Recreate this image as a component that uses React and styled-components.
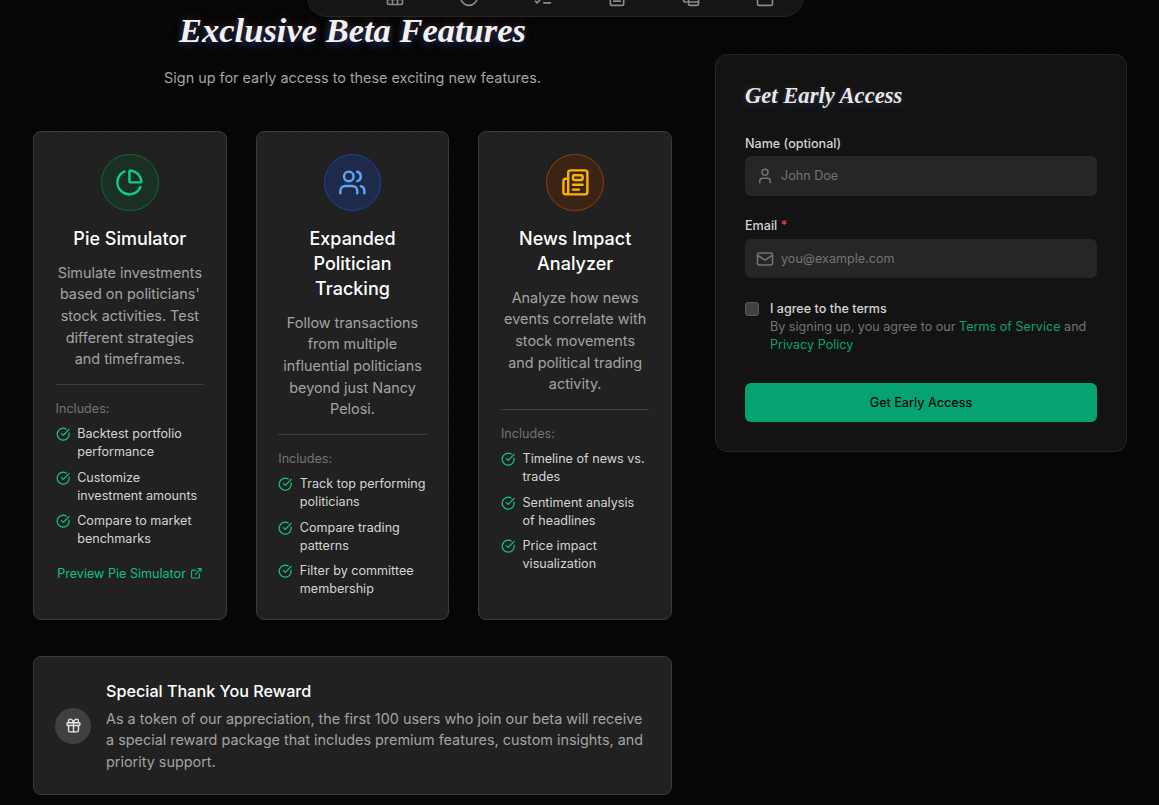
import React from 'react';
import styled, { createGlobalStyle } from 'styled-components';
import {
  ChartPie,
  CircleCheckBig,
  ExternalLink,
  Gift,
  Mail,
  Newspaper,
  User,
  Users,
  Grid3x3,
  Circle,
  ListChecks,
  FileText,
  Calendar,
} from 'lucide-react';

const GlobalStyle = createGlobalStyle`
  html, body {
    margin: 0;
    padding: 0;
    background: #050505;
  }
  body {
    font-family: Inter, "Liberation Sans", sans-serif;
    color: #fff;
  }
  * { box-sizing: border-box; }
`;

const Screen = styled.div`
  position: relative;
  width: 1159px;
  height: 805px;
  overflow: hidden;
  background-color: #060606;
  background-image: radial-gradient(rgba(255, 255, 255, 0.02) 1px, transparent 1px);
  background-size: 20px 20px;
  display: grid;
  grid-template-columns: 639px 412px;
  column-gap: 43px;
  padding: 0 0 0 33px;
`;

const NavBar = styled.nav`
  position: absolute;
  top: -40px;
  left: 307px;
  width: 497px;
  height: 57px;
  padding: 0 28px 0 77px;
  display: flex;
  align-items: flex-end;
  justify-content: space-between;
  background: #151515;
  border: 1px solid #262626;
  border-radius: 20px;
  color: #8a8a8a;
`;

const NavIcon = styled.span`
  display: block;
  width: 20px;
  height: 20px;
  margin-bottom: 9px;
`;

const MainColumn = styled.main`
  display: flex;
  flex-direction: column;
`;

const Title = styled.h1`
  margin: 12px 0 0;
  font-family: "Liberation Serif", serif;
  font-style: italic;
  font-weight: 700;
  font-size: 34.5px;
  line-height: 36px;
  text-align: center;
  color: #f2f2f2;
  text-shadow: 0 3px 8px rgba(59, 100, 220, 0.45), 0 -3px 8px rgba(220, 110, 40, 0.2);
`;

const Subtitle = styled.p`
  margin: 18px 0 0;
  font-size: 14.4px;
  line-height: 24px;
  text-align: center;
  color: #a3a3a3;
`;

const CardGrid = styled.div`
  margin-top: 41px;
  display: grid;
  grid-template-columns: repeat(3, 1fr);
  column-gap: 29px;
`;

const Card = styled.article`
  height: 489px;
  padding: 21.6px 21.6px 0;
  display: flex;
  flex-direction: column;
  align-items: center;
  background: #212121;
  border: 1px solid #3a3a3c;
  border-radius: 8px;
`;

const IconCircle = styled.div`
  width: 57.6px;
  height: 57.6px;
  flex: none;
  display: flex;
  align-items: center;
  justify-content: center;
  border-radius: 50%;
  background: ${(p) => p.$bg};
  border: 1px solid ${(p) => p.$border};
  color: ${(p) => p.$color};
`;

const CardTitle = styled.h3`
  margin: 15px 0 0;
  font-size: 18px;
  font-weight: 500;
  line-height: 25px;
  text-align: center;
  color: #fff;
`;

const CardText = styled.p`
  margin: 10.6px 0 0;
  font-size: 14.4px;
  line-height: 21.6px;
  text-align: center;
  color: #a3a3a3;
`;

const Includes = styled.div`
  width: 100%;
  margin-top: 14.4px;
  padding-top: 15px;
  border-top: 1px solid #3f3f41;
`;

const IncludesLabel = styled.div`
  font-size: 12.6px;
  line-height: 18px;
  color: #737373;
`;

const FeatureList = styled.ul`
  list-style: none;
  margin: 7.2px 0 0;
  padding: 0;
  display: flex;
  flex-direction: column;
  gap: 7.2px;
`;

const Feature = styled.li`
  display: flex;
  gap: 7.2px;
  font-size: 12.6px;
  line-height: 18px;
  color: #d4d4d4;

  svg {
    flex: none;
    margin-top: 2px;
    color: #10c989;
  }
`;

const PreviewLink = styled.a`
  margin-top: 17px;
  display: flex;
  align-items: center;
  justify-content: center;
  gap: 4px;
  font-size: 12.6px;
  line-height: 18px;
  color: #10c080;
`;

const RewardCard = styled.section`
  margin-top: 36px;
  height: 139px;
  padding: 0 21px;
  display: flex;
  align-items: center;
  gap: 15px;
  background: #212121;
  border: 1px solid #3a3a3c;
  border-radius: 8px;
`;

const RewardIcon = styled.div`
  width: 36px;
  height: 36px;
  flex: none;
  display: flex;
  align-items: center;
  justify-content: center;
  border-radius: 50%;
  background: #404040;
  color: #e5e5e5;
`;

const RewardTitle = styled.h4`
  margin: 0;
  font-size: 16.2px;
  font-weight: 500;
  line-height: 24px;
  color: #fff;
`;

const RewardText = styled.p`
  margin: 5px 0 0;
  font-size: 14.4px;
  line-height: 21.6px;
  color: #a3a3a3;
`;

const FormCard = styled.aside`
  margin-top: 54px;
  height: 398px;
  padding: 27px 29px 0;
  background: #131313;
  border: 1px solid #262626;
  border-radius: 12px;
`;

const FormTitle = styled.h2`
  margin: 0;
  font-family: "Liberation Serif", serif;
  font-style: italic;
  font-weight: 700;
  font-size: 22.6px;
  line-height: 28px;
  color: #e8e8e8;
  text-shadow: 0 2px 6px rgba(59, 100, 220, 0.3), 0 -2px 6px rgba(220, 110, 40, 0.15);
`;

const Label = styled.label`
  display: block;
  margin: ${(p) => p.$top}px 0 ${(p) => p.$bottom}px;
  font-size: 12.6px;
  font-weight: 500;
  line-height: 18px;
  color: #d4d4d4;
`;

const Required = styled.span`
  color: #ef4444;
`;

const InputWrap = styled.div`
  height: 39.6px;
  padding: 0 11px;
  display: flex;
  align-items: center;
  gap: 7px;
  background: #262626;
  border-radius: 6px;
  color: #737373;
`;

const Input = styled.input`
  flex: 1;
  min-width: 0;
  padding: 0;
  border: 0;
  outline: 0;
  background: transparent;
  font: inherit;
  font-size: 12.6px;
  color: #e5e5e5;

  &::placeholder {
    color: #737373;
    opacity: 1;
  }
`;

const TermsRow = styled.div`
  margin-top: 21.6px;
  display: flex;
  gap: 11px;
`;

const CheckBox = styled.span`
  width: 14px;
  height: 14px;
  flex: none;
  margin-top: 1.8px;
  background: #404040;
  border: 1px solid #5a5a5a;
  border-radius: 3px;
`;

const TermsLabel = styled.div`
  font-size: 12.6px;
  font-weight: 500;
  line-height: 18px;
  color: #d4d4d4;
`;

const TermsText = styled.div`
  font-size: 12.6px;
  line-height: 18px;
  color: #737373;
`;

const TermsLink = styled.a`
  color: #0aa06f;
`;

const SubmitButton = styled.button`
  width: 100%;
  height: 39px;
  margin-top: 29px;
  border: 0;
  border-radius: 6px;
  background: #05a371;
  font: inherit;
  font-size: 12.6px;
  font-weight: 500;
  color: #0a0a0a;
`;

const StackedCards = ({ size }) => (
  <svg width={size} height={size} viewBox="0 0 24 24" fill="none" stroke="currentColor" strokeWidth="2" strokeLinecap="round" strokeLinejoin="round">
    <path d="M3 15v1a2 2 0 0 0 2 2h2" />
    <rect x="9" y="8" width="12" height="14" rx="2" />
    <path d="M9 13h12" />
    <path d="M9 18h12" />
  </svg>
);

const features = [
  {
    icon: ChartPie,
    bg: '#1b3025',
    border: '#0f6b35',
    color: '#0fcf85',
    title: 'Pie Simulator',
    text: "Simulate investments based on politicians' stock activities. Test different strategies and timeframes.",
    items: ['Backtest portfolio performance', 'Customize investment amounts', 'Compare to market benchmarks'],
    preview: 'Preview Pie Simulator',
  },
  {
    icon: Users,
    bg: '#1e2a4a',
    border: '#1e3fa0',
    color: '#60a5fa',
    title: 'Expanded Politician Tracking',
    text: 'Follow transactions from multiple influential politicians beyond just Nancy Pelosi.',
    items: ['Track top performing politicians', 'Compare trading patterns', 'Filter by committee membership'],
  },
  {
    icon: Newspaper,
    bg: '#3b2415',
    border: '#8a4010',
    color: '#fbb500',
    title: 'News Impact Analyzer',
    text: 'Analyze how news events correlate with stock movements and political trading activity.',
    items: ['Timeline of news vs. trades', 'Sentiment analysis of headlines', 'Price impact visualization'],
  },
];

const navIcons = [Grid3x3, Circle, ListChecks, FileText, StackedCards, Calendar];

const App = () => (
  <Screen>
    <GlobalStyle />
    <NavBar>
      {navIcons.map((Icon, i) => (
        <NavIcon key={i}>
          <Icon size={20} />
        </NavIcon>
      ))}
    </NavBar>
    <MainColumn>
      <Title>Exclusive Beta Features</Title>
      <Subtitle>Sign up for early access to these exciting new features.</Subtitle>
      <CardGrid>
        {features.map(({ icon: Icon, bg, border, color, title, text, items, preview }) => (
          <Card key={title}>
            <IconCircle $bg={bg} $border={border} $color={color}>
              <Icon size={28.8} strokeWidth={2} />
            </IconCircle>
            <CardTitle>{title}</CardTitle>
            <CardText>{text}</CardText>
            <Includes>
              <IncludesLabel>Includes:</IncludesLabel>
              <FeatureList>
                {items.map((item) => (
                  <Feature key={item}>
                    <CircleCheckBig size={14.4} />
                    <span>{item}</span>
                  </Feature>
                ))}
              </FeatureList>
            </Includes>
            {preview && (
              <PreviewLink>
                {preview}
                <ExternalLink size={12.6} />
              </PreviewLink>
            )}
          </Card>
        ))}
      </CardGrid>
      <RewardCard>
        <RewardIcon>
          <Gift size={17} />
        </RewardIcon>
        <div>
          <RewardTitle>Special Thank You Reward</RewardTitle>
          <RewardText>
            As a token of our appreciation, the first 100 users who join our beta will receive a special
            reward package that includes premium features, custom insights, and priority support.
          </RewardText>
        </div>
      </RewardCard>
    </MainColumn>
    <FormCard>
      <FormTitle>Get Early Access</FormTitle>
      <Label $top={24.8} $bottom={3.2}>Name (optional)</Label>
      <InputWrap>
        <User size={18} />
        <Input placeholder="John Doe" />
      </InputWrap>
      <Label $top={21.6} $bottom={3.6}>
        Email <Required>*</Required>
      </Label>
      <InputWrap>
        <Mail size={18} />
        <Input placeholder="you@example.com" />
      </InputWrap>
      <TermsRow>
        <CheckBox />
        <div>
          <TermsLabel>I agree to the terms</TermsLabel>
          <TermsText>
            By signing up, you agree to our <TermsLink>Terms of Service</TermsLink> and{' '}
            <TermsLink>Privacy Policy</TermsLink>
          </TermsText>
        </div>
      </TermsRow>
      <SubmitButton>Get Early Access</SubmitButton>
    </FormCard>
  </Screen>
);

export default App;
